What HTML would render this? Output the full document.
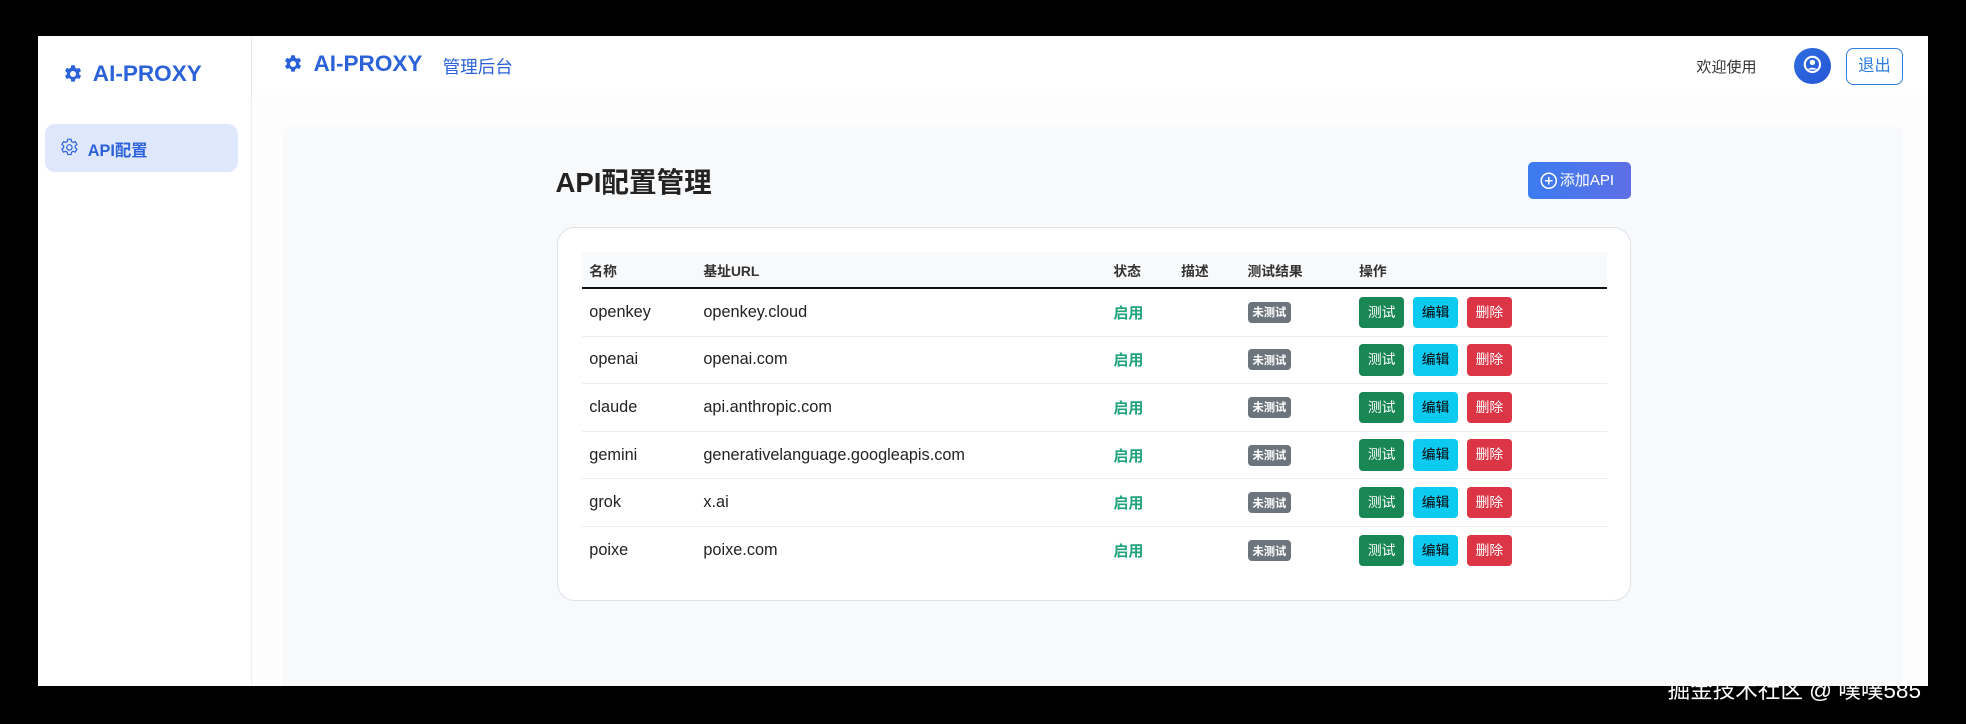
<!DOCTYPE html>
<html><head><meta charset="utf-8"><style>
*{box-sizing:border-box;margin:0;padding:0}
html,body{width:1966px;height:724px;background:#000;overflow:hidden}
#w{zoom:1.25383;width:1568px;height:577px;position:relative;background:#000;font-family:"Liberation Sans","Noto Sans CJK SC",sans-serif}
.a{position:absolute}
.side{left:30px;top:29px;width:171px;height:518px;background:#fff;border-right:1px solid #eceef2}
.hdr{left:201px;top:29px;width:1337px;height:47px;background:#fff;box-shadow:0 2px 4px rgba(0,0,0,.04)}
.main{left:201px;top:76px;width:1337px;height:471px;background:#fdfdfe}
.panel{left:226px;top:101px;width:1292px;height:446px;background:#f8f9fb;border-radius:6px 6px 0 0}
.blue{color:#2b62d9}
.card{left:444px;top:181px;width:857px;height:298px;background:#fff;border:1px solid #dfe2e6;border-radius:14px}
table{position:absolute;left:464px;top:201px;width:818px;border-collapse:collapse;font-size:13px;color:#222}
th{height:29px;background:#f8f9fa;font-size:11px;color:#333;text-align:left;font-weight:bold;border-bottom:2px solid #111;padding-left:6px}
td{height:38px;border-bottom:1px solid #eceef0;padding-left:6px}
tr:last-child td{border-bottom:none}
.st{color:#1ea37a;font-weight:bold;font-size:12px}
.bd{display:inline-block;background:#6c757d;color:#fff;font-size:9px;font-weight:bold;padding:2px 4px;border-radius:3px}
.b{display:inline-block;width:36px;height:25px;line-height:25px;text-align:center;font-size:11px;border-radius:3px;margin-right:7px;color:#fff}
</style></head><body><div id="w">
<div class="a side"></div>
<div class="a hdr"></div>
<div class="a main"></div>
<div class="a panel"></div>
<svg class="a" style="left:50px;top:51px" width="16" height="16" viewBox="0 0 16 16"><path fill="#2b62d9" d="M9.4 1h-2.8l-.4 2a5 5 0 0 0-1.3.8l-1.9-.7L1.6 5.5 3.1 6.8a5 5 0 0 0 0 1.5L1.6 9.6 3 12l1.9-.7a5 5 0 0 0 1.3.8l.4 2h2.8l.4-2a5 5 0 0 0 1.3-.8l1.9.7 1.4-2.4-1.5-1.3a5 5 0 0 0 0-1.5l1.5-1.3L13 3.1l-1.9.7A5 5 0 0 0 9.8 3zM8 5.6A2.4 2.4 0 1 1 8 10.4 2.4 2.4 0 0 1 8 5.6z"/></svg>
<div class="a blue" style="left:74px;top:49px;font-size:18px;font-weight:bold">AI-PROXY</div>
<div class="a" style="left:36px;top:99px;width:154px;height:38px;background:#dfe7fd;border-radius:8px"></div>
<svg class="a" style="left:48px;top:110px" width="15" height="15" viewBox="0 0 16 16"><path fill="none" stroke="#2b62d9" stroke-width="1" d="M9.4 1h-2.8l-.4 2a5 5 0 0 0-1.3.8l-1.9-.7L1.6 5.5 3.1 6.8a5 5 0 0 0 0 1.5L1.6 9.6 3 12l1.9-.7a5 5 0 0 0 1.3.8l.4 2h2.8l.4-2a5 5 0 0 0 1.3-.8l1.9.7 1.4-2.4-1.5-1.3a5 5 0 0 0 0-1.5l1.5-1.3L13 3.1l-1.9.7A5 5 0 0 0 9.8 3z"/><circle cx="8" cy="8" r="2.3" fill="none" stroke="#2b62d9"/></svg>
<div class="a blue" style="left:70px;top:109px;font-size:13px;font-weight:bold">API配置</div>
<svg class="a" style="left:226px;top:43px" width="16" height="16" viewBox="0 0 16 16"><path fill="#2b62d9" d="M9.4 1h-2.8l-.4 2a5 5 0 0 0-1.3.8l-1.9-.7L1.6 5.5 3.1 6.8a5 5 0 0 0 0 1.5L1.6 9.6 3 12l1.9-.7a5 5 0 0 0 1.3.8l.4 2h2.8l.4-2a5 5 0 0 0 1.3-.8l1.9.7 1.4-2.4-1.5-1.3a5 5 0 0 0 0-1.5l1.5-1.3L13 3.1l-1.9.7A5 5 0 0 0 9.8 3zM8 5.6A2.4 2.4 0 1 1 8 10.4 2.4 2.4 0 0 1 8 5.6z"/></svg>
<div class="a blue" style="left:250px;top:41px;font-size:18px;font-weight:bold">AI-PROXY</div>
<div class="a blue" style="left:353px;top:43px;font-size:14px">管理后台</div>
<div class="a" style="left:1353px;top:45px;font-size:12px;color:#333">欢迎使用</div>
<div class="a" style="left:1431px;top:38px;width:29px;height:29px;border-radius:50%;background:linear-gradient(135deg,#2f6ee0,#2556d6)"></div>
<svg class="a" style="left:1438px;top:44px" width="15" height="15" viewBox="0 0 16 16"><circle cx="8" cy="8" r="6.5" fill="none" stroke="#fff" stroke-width="1.8"/><circle cx="8" cy="6.3" r="2.3" fill="#fff"/><path d="M3.8 12.5a5 3.5 0 0 1 8.4 0" fill="#fff"/></svg>
<div class="a" style="left:1472px;top:38px;width:46px;height:30px;border:1px solid #2b7de0;border-radius:6px;color:#2b7de0;font-size:13px;text-align:center;line-height:28px">退出</div>
<div class="a" style="left:443px;top:128px;font-size:22px;font-weight:bold;color:#222">API配置管理</div>
<div class="a" style="left:1219px;top:129px;width:82px;height:30px;border-radius:4px;background:linear-gradient(90deg,#3b7cf0,#5e6fe6);color:#fff;font-size:12px;line-height:30px;padding-left:25px">添加API</div>
<svg class="a" style="left:1228px;top:137px" width="14" height="14" viewBox="0 0 14 14"><circle cx="7" cy="7" r="6" fill="none" stroke="#fff" stroke-width="1.2"/><path d="M7 4v6M4 7h6" stroke="#fff" stroke-width="1.2"/></svg>
<div class="a card"></div>
<table>
<tr><th style="width:91px">名称</th><th style="width:327px">基址URL</th><th style="width:54px">状态</th><th style="width:53px">描述</th><th style="width:89px">测试结果</th><th>操作</th></tr>
<tr><td>openkey</td><td>openkey.cloud</td><td class="st">启用</td><td></td><td><span class="bd">未测试</span></td><td><span class="b" style="background:#198754">测试</span><span class="b" style="background:#0dcaf0;color:#000">编辑</span><span class="b" style="background:#dc3545">删除</span></td></tr>
<tr><td>openai</td><td>openai.com</td><td class="st">启用</td><td></td><td><span class="bd">未测试</span></td><td><span class="b" style="background:#198754">测试</span><span class="b" style="background:#0dcaf0;color:#000">编辑</span><span class="b" style="background:#dc3545">删除</span></td></tr>
<tr><td>claude</td><td>api.anthropic.com</td><td class="st">启用</td><td></td><td><span class="bd">未测试</span></td><td><span class="b" style="background:#198754">测试</span><span class="b" style="background:#0dcaf0;color:#000">编辑</span><span class="b" style="background:#dc3545">删除</span></td></tr>
<tr><td>gemini</td><td>generativelanguage.googleapis.com</td><td class="st">启用</td><td></td><td><span class="bd">未测试</span></td><td><span class="b" style="background:#198754">测试</span><span class="b" style="background:#0dcaf0;color:#000">编辑</span><span class="b" style="background:#dc3545">删除</span></td></tr>
<tr><td>grok</td><td>x.ai</td><td class="st">启用</td><td></td><td><span class="bd">未测试</span></td><td><span class="b" style="background:#198754">测试</span><span class="b" style="background:#0dcaf0;color:#000">编辑</span><span class="b" style="background:#dc3545">删除</span></td></tr>
<tr><td>poixe</td><td>poixe.com</td><td class="st">启用</td><td></td><td><span class="bd">未测试</span></td><td><span class="b" style="background:#198754">测试</span><span class="b" style="background:#0dcaf0;color:#000">编辑</span><span class="b" style="background:#dc3545">删除</span></td></tr>
</table>
<div class="a" style="left:1330px;top:537px;font-size:18px;color:#fff;white-space:nowrap">掘金技术社区 @ 噗噗585</div>
</div></body></html>
